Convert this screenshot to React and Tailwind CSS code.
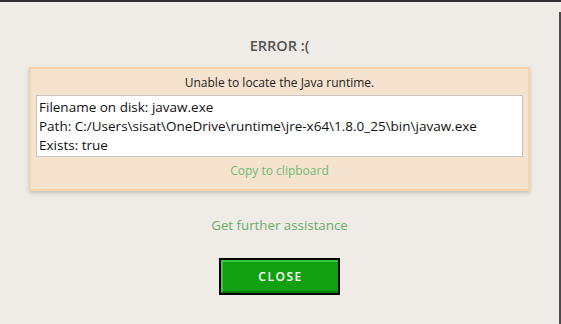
import React from 'react';

const font = { fontFamily: '"Open Sans", "Noto Sans", sans-serif' };

export default function App() {
  const details = [
    'Filename on disk: javaw.exe',
    'Path: C:/Users\\sisat\\OneDrive\\runtime\\jre-x64\\1.8.0_25\\bin\\javaw.exe',
    'Exists: true',
  ];

  return (
    <div className="w-full h-[324px] flex flex-col bg-[#efebe6] overflow-hidden" style={font}>
      {/* window top edge */}
      <div className="h-[2px] bg-[#2e2e2e] shrink-0" />

      <div className="flex flex-1">
        <div className="flex-1 flex flex-col items-center">
          <h1 className="mt-[34px] text-[14.5px] leading-[20px] font-semibold text-[#555555]">ERROR :(</h1>

          {/* error panel */}
          <div className="mt-[11px] w-[501px] bg-[#f5e2cf] border-2 border-[#f5d4a8] shadow-[0_2px_4px_rgba(0,0,0,0.18)] px-[5px] pt-[5px] pb-[10px] flex flex-col">
            <p className="text-center text-[12px] leading-[18px] text-[#222222]">Unable to locate the Java runtime.</p>
            <div className="mt-[3px] h-[62px] bg-white border border-[#c9c4c0] px-[2px] pt-[2px] text-[13.5px] leading-[19px] text-[#111111]">
              {details.map((line) => (
                <div key={line} className="whitespace-nowrap">{line}</div>
              ))}
            </div>
            <button className="mt-[6px] self-center text-[12px] leading-[16px] text-[#6dbb6d]">Copy to clipboard</button>
          </div>

          <a className="mt-[25px] text-[13.3px] leading-[18px] text-[#6aab66] cursor-pointer">Get further assistance</a>

          {/* close button */}
          <button className="mt-[24px] w-[121px] h-[37px] border-2 border-black bg-[#11a011] flex">
            <span className="flex-1 flex items-center justify-center border-t-2 border-l-2 border-[#3cc43c] border-b-2 border-b-[#0b7a0b] border-r-0 text-white text-[12px] font-semibold tracking-[1.5px]">
              CLOSE
            </span>
          </button>
        </div>

        {/* right window edge */}
        <div className="w-[2px] mt-[10px] bg-[#4a4a4a] shrink-0" />
      </div>
    </div>
  );
}
